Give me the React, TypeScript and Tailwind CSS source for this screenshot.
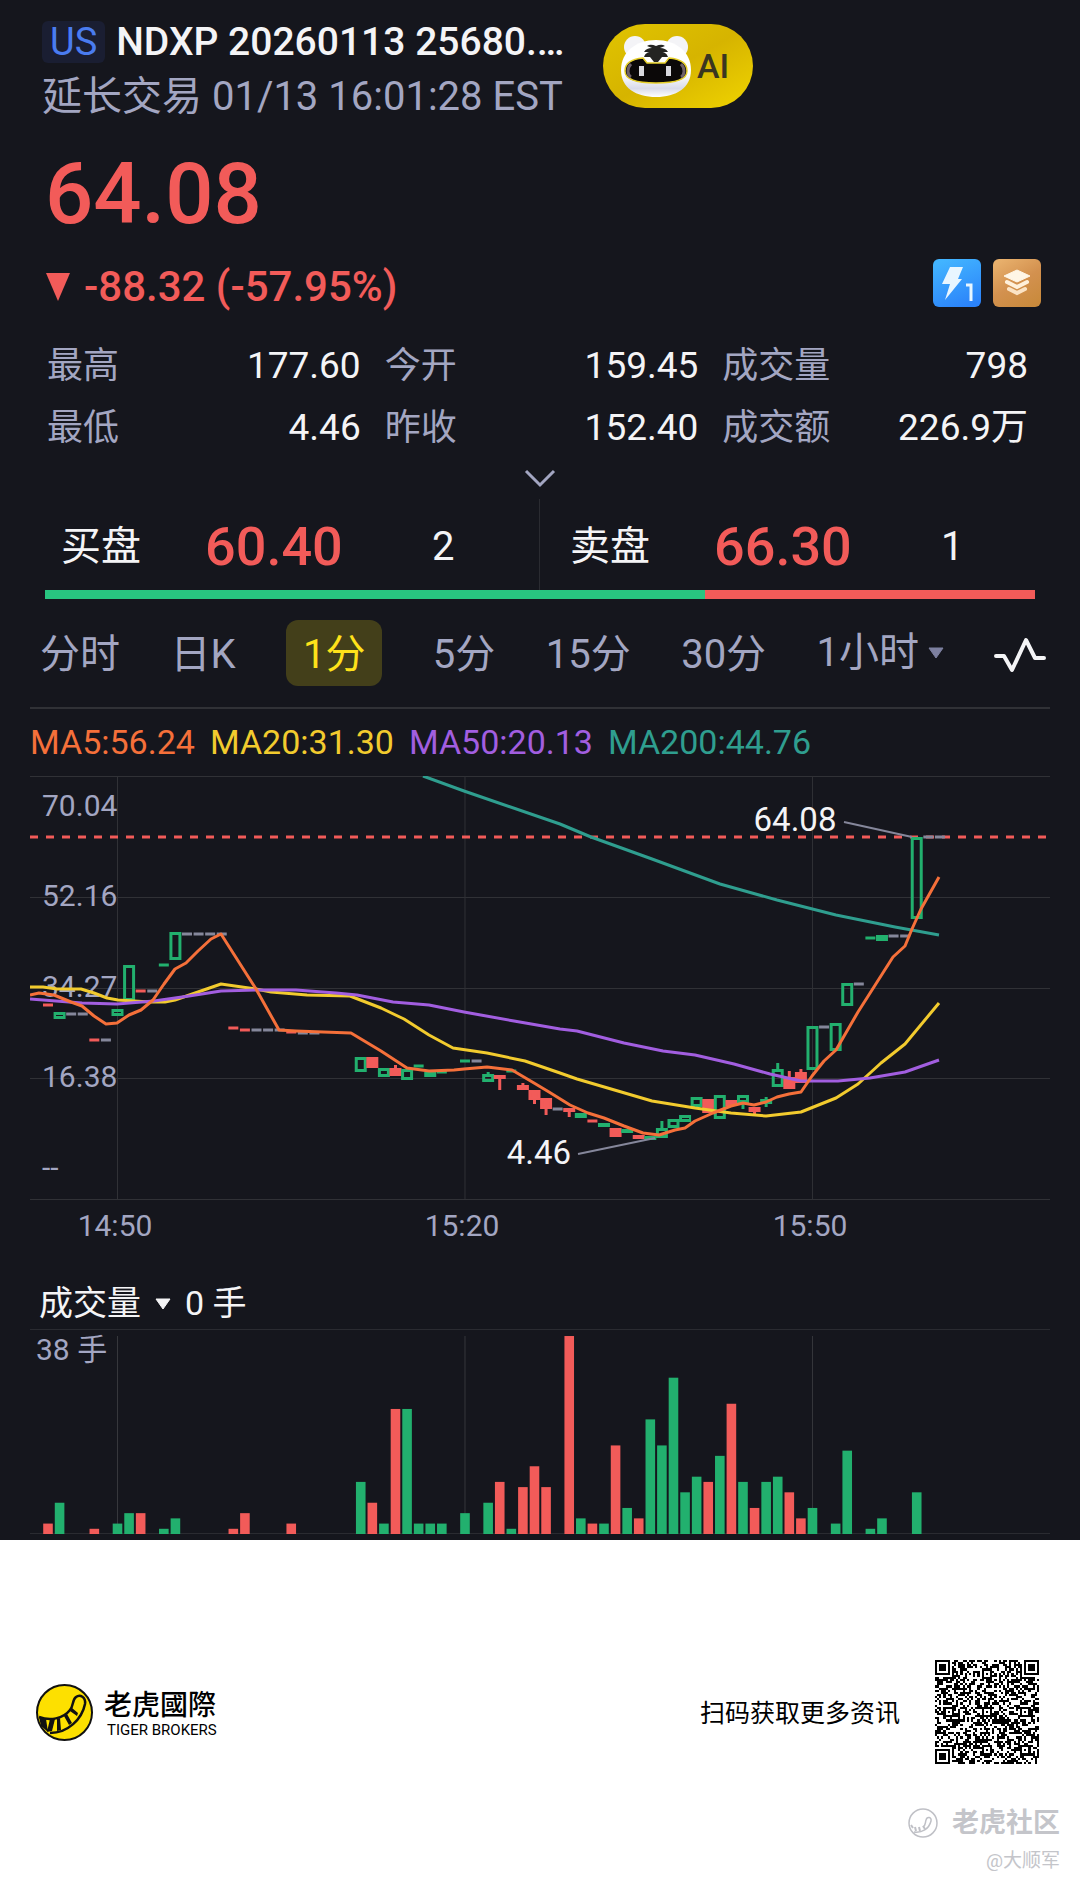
import { useState } from 'react';

const UP = '#22b06e';
const DOWN = '#f25b59';
const FLAT = '#85879b';

interface Candle {
  i: number;
  top: number;
  bottom: number;
  type: 'up' | 'down';
  high?: number;
  low?: number;
}

interface Dash {
  i: number;
  y: number;
  color: string;
}

// minutes are counted from 14:50
const toX = (i: number) => 87.5 + i * 11.583;

const candles: Candle[] = [
  { i: -5, top: 236, bottom: 243, type: 'up' },
  { i: 0, top: 233, bottom: 240, type: 'up' },
  { i: 1, top: 189, bottom: 225, type: 'up' },
  { i: 5, top: 156, bottom: 184, type: 'up' },
  { i: 21, top: 281, bottom: 296, type: 'up' },
  { i: 22, top: 281, bottom: 292, type: 'down' },
  { i: 23, top: 292, bottom: 301, type: 'up' },
  { i: 24, top: 292, bottom: 300, type: 'down', high: 289 },
  { i: 25, top: 293, bottom: 304, type: 'up' },
  { i: 27, top: 296, bottom: 301, type: 'up' },
  { i: 32, top: 298, bottom: 306, type: 'up', high: 296 },
  { i: 33, top: 299, bottom: 302, type: 'down', low: 314 },
  { i: 35, top: 309, bottom: 314, type: 'down', high: 307 },
  { i: 36, top: 314, bottom: 324, type: 'down', low: 328 },
  { i: 37, top: 322, bottom: 333, type: 'down', low: 339 },
  { i: 39, top: 332, bottom: 336, type: 'down', low: 341 },
  { i: 40, top: 337, bottom: 342, type: 'up' },
  { i: 42, top: 347, bottom: 351, type: 'up' },
  { i: 43, top: 352, bottom: 361, type: 'down' },
  { i: 44, top: 353, bottom: 357, type: 'up' },
  { i: 45, top: 359, bottom: 363, type: 'down' },
  { i: 46, top: 360, bottom: 363, type: 'up' },
  { i: 47, top: 352, bottom: 362, type: 'up', high: 345 },
  { i: 48, top: 343, bottom: 352, type: 'up' },
  { i: 49, top: 339, bottom: 346, type: 'up' },
  { i: 50, top: 321, bottom: 331, type: 'up' },
  { i: 51, top: 323, bottom: 337, type: 'down' },
  { i: 52, top: 319, bottom: 343, type: 'up' },
  { i: 53, top: 324, bottom: 330, type: 'down' },
  { i: 54, top: 319, bottom: 327, type: 'up', low: 333 },
  { i: 55, top: 331, bottom: 336, type: 'down', low: 339 },
  { i: 56, top: 323, bottom: 328, type: 'up', high: 321, low: 331 },
  { i: 57, top: 293, bottom: 311, type: 'up', high: 287 },
  { i: 58, top: 301, bottom: 313, type: 'down', high: 295 },
  { i: 59, top: 296, bottom: 307, type: 'down', high: 293 },
  { i: 60, top: 250, bottom: 294, type: 'up' },
  { i: 62, top: 247, bottom: 275, type: 'up' },
  { i: 63, top: 207, bottom: 230, type: 'up' },
  { i: 66, top: 159, bottom: 165, type: 'up' },
  { i: 69, top: 61, bottom: 143, type: 'up' },
];

const dashes: Dash[] = [
  { i: -6, y: 229, color: DOWN },
  { i: -4, y: 238, color: FLAT },
  { i: -3, y: 238, color: FLAT },
  { i: -2, y: 264, color: DOWN },
  { i: -1, y: 264, color: FLAT },
  { i: 2, y: 215, color: DOWN },
  { i: 3, y: 215, color: FLAT },
  { i: 4, y: 189, color: UP },
  { i: 6, y: 158, color: FLAT },
  { i: 7, y: 158, color: FLAT },
  { i: 8, y: 158, color: FLAT },
  { i: 9, y: 158, color: FLAT },
  { i: 10, y: 252, color: DOWN },
  { i: 11, y: 254, color: DOWN },
  { i: 12, y: 254, color: FLAT },
  { i: 13, y: 254, color: FLAT },
  { i: 14, y: 254, color: FLAT },
  { i: 15, y: 256, color: DOWN },
  { i: 16, y: 257, color: FLAT },
  { i: 17, y: 257, color: FLAT },
  { i: 26, y: 290, color: UP },
  { i: 28, y: 296, color: UP },
  { i: 30, y: 285, color: UP },
  { i: 31, y: 285, color: FLAT },
  { i: 34, y: 295, color: UP },
  { i: 38, y: 333, color: FLAT },
  { i: 41, y: 345, color: DOWN },
  { i: 61, y: 251, color: FLAT },
  { i: 64, y: 208, color: FLAT },
  { i: 65, y: 162, color: UP },
  { i: 67, y: 160, color: FLAT },
  { i: 68, y: 160, color: FLAT },
  { i: 70, y: 61, color: FLAT },
  { i: 71, y: 61, color: FLAT },
];

const lines = [
  {
    color: '#2f9e8f',
    points: '393,0 434,15 530,48 561,61 622,83 690,108 747,124 806,139 865,151 909,159',
  },
  {
    color: '#f2cb2e',
    points:
      '0,211 13,211 27,213 51,213 64,217 77,222 88,224 120,226 135,226 145,224 168,216 191,208 226,213 241,216 277,219 320,220 351,232 374,243 399,259 423,272 457,277 495,285 530,297 547,303 622,325 665,332 701,337 736,340 771,336 806,322 828,308 851,287 875,268 909,227',
  },
  {
    color: '#a25ee0',
    points:
      '0,223 13,224 52,227 87,228 124,225 159,220 191,215 227,214 266,214 306,217 327,219 363,226 399,229 434,236 484,245 530,253 547,255 594,267 633,275 665,279 704,288 740,298 771,305 808,305 840,302 875,296 909,284',
  },
  {
    color: '#f5703a',
    points:
      '0,219 9,217 24,219 41,226 52,230 64,240 76,248 87,247 99,239 111,234 123,224 134,208 145,193 156,187 168,175 181,163 191,158 226,213 249,254 266,255 293,256 321,257 331,263 351,275 377,292 399,295 424,294 434,293 457,291 482,294 504,307 519,316 540,329 558,337 574,342 594,350 613,357 629,359 645,354 655,352 665,345 683,337 701,330 713,327 724,329 736,326 747,321 759,318 771,316 782,300 794,285 806,274 828,236 863,181 875,170 882,153 891,133 909,101',
  },
];

// [minute, lots, direction]
const volumes: [number, number, 'up' | 'down'][] = [
  [-6, 2, 'down'], [-5, 6, 'up'], [-2, 1, 'down'], [0, 2, 'up'], [1, 4, 'up'], [2, 4, 'down'],
  [4, 1, 'up'], [5, 3, 'up'], [10, 1, 'down'], [11, 4, 'down'], [15, 2, 'down'], [21, 10, 'up'],
  [22, 6, 'down'], [23, 2, 'up'], [24, 24, 'down'], [25, 24, 'up'], [26, 2, 'up'], [27, 2, 'up'],
  [28, 2, 'up'], [30, 4, 'up'], [32, 6, 'up'], [33, 10, 'down'], [34, 1, 'up'], [35, 9, 'down'],
  [36, 13, 'down'], [37, 9, 'down'], [39, 38, 'down'], [40, 3, 'up'], [41, 2, 'down'], [42, 2, 'up'],
  [43, 17, 'down'], [44, 5, 'up'], [45, 3, 'down'], [46, 22, 'up'], [47, 17, 'up'], [48, 30, 'up'],
  [49, 8, 'up'], [50, 11, 'up'], [51, 10, 'down'], [52, 15, 'up'], [53, 25, 'down'], [54, 10, 'up'],
  [55, 5, 'down'], [56, 10, 'up'], [57, 11, 'up'], [58, 8, 'down'], [59, 3, 'down'], [60, 5, 'up'],
  [62, 2, 'up'], [63, 16, 'up'], [65, 1, 'up'], [66, 3, 'up'], [69, 8, 'up'],
];

const stats = [
  { label: '最高', value: '177.60' },
  { label: '今开', value: '159.45' },
  { label: '成交量', value: '798' },
  { label: '最低', value: '4.46' },
  { label: '昨收', value: '152.40' },
  { label: '成交额', value: '226.9万' },
];

const tabs = ['分时', '日K', '1分', '5分', '15分', '30分'];

const MascotIcon = () => (
  <svg viewBox="0 0 74 62" className="h-[62px] w-[74px]" aria-hidden="true">
    <defs>
      <linearGradient id="head" x1="0" y1="0" x2="0" y2="1">
        <stop offset="0.6" stopColor="#ffffff" />
        <stop offset="0.85" stopColor="#d9dbea" />
        <stop offset="1" stopColor="#ffffff" />
      </linearGradient>
    </defs>
    <circle cx="16" cy="12" r="11" fill="#f4f4f7" />
    <circle cx="58" cy="12" r="11" fill="#f4f4f7" />
    <path d="M37 5C57 5 72 17 72 35c0 18-15 27-35 27S2 53 2 35C2 17 17 5 37 5Z" fill="url(#head)" />
    <path
      d="M24 23l4 5h18l4-5c12 1 18 6 18 13 0 8-9 12-31 12S6 44 6 36c0-7 6-12 18-13Z"
      fill="#0b0808"
      stroke="#e6cf2a"
      strokeWidth="1.5"
    />
    <path d="M12 29c-4 4-4 11 0 13M62 29c4 4 4 11 0 13" stroke="#6e6068" strokeWidth="3" fill="none" />
    <path
      d="M28 11c3-2 6-1 9 0 3-1 6-2 9 0l-5 2c4 0 6 1 8 4l-7 0c4 0 6 2 7 5l-6 0-4 5h-4l-4-5-6 0c1-3 3-5 7-5l-7 0c2-3 4-4 8-4Z"
      fill="#242422"
    />
    <rect x="20" y="31" width="5" height="10" fill="#d9d9de" />
    <rect x="47" y="31" width="5" height="10" fill="#d9d9de" />
  </svg>
);

const LevelOneIcon = () => (
  <svg viewBox="0 0 48 48" className="size-12" aria-hidden="true">
    <defs>
      <linearGradient id="level" x1="0.3" y1="0" x2="0.7" y2="1">
        <stop offset="0" stopColor="#42b4ff" />
        <stop offset="1" stopColor="#2b83fa" />
      </linearGradient>
    </defs>
    <rect width="48" height="48" rx="6" fill="url(#level)" />
    <path d="M17 8h13l-5 12h4L12 41l5-16H9Z" fill="#e8f6ff" />
    <path d="M33 26h5v16" fill="none" stroke="#e8f6ff" strokeWidth="3" />
  </svg>
);

const LayersIcon = () => (
  <svg viewBox="0 0 48 48" className="size-12" aria-hidden="true">
    <defs>
      <linearGradient id="layers" x1="0.2" y1="0" x2="0.8" y2="1">
        <stop offset="0" stopColor="#e8b06c" />
        <stop offset="0.5" stopColor="#d3914f" />
        <stop offset="1" stopColor="#c98a3c" />
      </linearGradient>
    </defs>
    <rect width="48" height="48" rx="6" fill="url(#layers)" />
    <path d="M24 11l13 6-13 6-13-6Z" fill="#fff6e6" stroke="#fff6e6" strokeLinejoin="round" />
    <path d="M14 23l10 5 10-5" fill="none" stroke="#fff0da" strokeWidth="4" strokeLinecap="round" />
    <path d="M16 30l8 4 8-4" fill="none" stroke="#fbe3c4" strokeWidth="4" strokeLinecap="round" />
  </svg>
);

const TailLogo = () => (
  <svg viewBox="0 0 57 57" className="size-[57px]" aria-hidden="true">
    <circle cx="28.5" cy="28.5" r="27.5" fill="#fde000" stroke="#111" strokeWidth="2" />
    <path
      d="M3 33c11 4 24 2 31-7 4-5 2-10 6-13s10 0 9 7c-3 15-17 29-35 29"
      fill="none"
      stroke="#111"
      strokeWidth="2.5"
    />
    <path d="M3 33l7 2 2 13-7-6ZM14 35h5l-3 12-5 1ZM21 35l3-1 1 12-4 1ZM28 32l3-2 5 9-3 2ZM34 27l2-3 6 5-1 3Z" fill="#111" />
  </svg>
);

const CommunityLogo = () => (
  <svg viewBox="0 0 30 30" className="size-[30px]" fill="none" stroke="#bfc0c6" aria-hidden="true">
    <circle cx="15" cy="15" r="14" strokeWidth="1.5" />
    <path d="M6 24c8 1 15-3 17-11 1-4-4-5-5-1-1 3 0 5-3 7" strokeWidth="1.5" />
    <path d="M3 17l2 3M7 19l1 4M11 19l1 4M15 18l2 3" strokeWidth="2" />
  </svg>
);

const QR_SIZE = 49;

const buildQrPath = () => {
  const marks = [6, 24, 42];
  let seed = 20260113;
  let path = '';
  for (let y = 0; y < QR_SIZE; y++) {
    for (let x = 0; x < QR_SIZE; x++) {
      seed = (seed * 1103515245 + 12345) % 2147483648;
      let dark = seed / 2147483648 < 0.5;
      if (x === 6 || y === 6) dark = (x + y) % 2 === 0;
      marks.forEach((my) =>
        marks.forEach((mx) => {
          const d = Math.max(Math.abs(x - mx), Math.abs(y - my));
          if (d <= 2) dark = d !== 1;
        })
      );
      [[3, 3], [QR_SIZE - 4, 3], [3, QR_SIZE - 4]].forEach(([fx, fy]) => {
        const d = Math.max(Math.abs(x - fx), Math.abs(y - fy));
        if (d <= 4) dark = d !== 2 && d !== 4;
      });
      if (dark) path += `M${x} ${y}h1v1h-1Z`;
    }
  }
  return path;
};

const qrPath = buildQrPath();

const PriceChart = () => (
  <svg viewBox="0 0 1020 474" className="block w-full" role="img" aria-label="1分K线">
    <g stroke="#303136" strokeWidth="1">
      {[0.5, 121.5, 212.5, 302.5, 423.5].map((y) => (
        <line key={y} x1="0" x2="1020" y1={y} y2={y} />
      ))}
      {[0, 30, 60].map((i) => (
        <line key={i} x1={toX(i)} x2={toX(i)} y1="0" y2="423" />
      ))}
    </g>
    <g fill="#a3a6c2" fontSize="30">
      <text x="12" y="40">70.04</text>
      <text x="12" y="130">52.16</text>
      <text x="12" y="221">34.27</text>
      <text x="12" y="311">16.38</text>
      <text x="12" y="402">--</text>
      <g textAnchor="middle">
        <text x="85" y="460">14:50</text>
        <text x="432" y="460">15:20</text>
        <text x="780" y="460">15:50</text>
      </g>
    </g>
    <line x1="0" x2="1016" y1="61" y2="61" stroke={DOWN} strokeWidth="3" strokeDasharray="8 8" />
    {dashes.map((d) => (
      <rect key={d.i} x={toX(d.i) - 5} y={d.y - 1.5} width="10" height="3" fill={d.color} />
    ))}
    {candles.map((c) => {
      const x = toX(c.i);
      const color = c.type === 'up' ? UP : DOWN;
      return (
        <g key={c.i} stroke={color} strokeWidth="3">
          {c.high && <line x1={x} x2={x} y1={c.high} y2={c.top} />}
          {c.low && <line x1={x} x2={x} y1={c.bottom} y2={c.low} />}
          <rect
            x={x - 4.5}
            y={c.top + 1.5}
            width="9"
            height={Math.max(c.bottom - c.top - 3, 1)}
            fill={c.type === 'up' ? 'none' : color}
          />
        </g>
      );
    })}
    {lines.map((l) => (
      <polyline key={l.color} points={l.points} fill="none" stroke={l.color} strokeWidth="3" strokeLinejoin="round" />
    ))}
    <g stroke="#85879b" strokeWidth="2">
      <line x1="814" y1="46" x2="882" y2="61" />
      <line x1="548" y1="378" x2="625" y2="362" />
    </g>
    <g fill="#f4f4f6" fontSize="33" textAnchor="middle">
      <text x="765" y="55">64.08</text>
      <text x="509" y="388">4.46</text>
    </g>
  </svg>
);

const VolumeChart = () => (
  <svg viewBox="0 0 1020 211" className="block w-full" role="img" aria-label="成交量">
    <g stroke="#2a2b31" strokeWidth="1">
      <line x1="0" x2="1020" y1="0.5" y2="0.5" />
      <line x1="0" x2="1020" y1="204.5" y2="204.5" />
      {[0, 30, 60].map((i) => (
        <line key={i} x1={toX(i)} x2={toX(i)} y1="7" y2="205" stroke="#36373c" />
      ))}
    </g>
    <text x="6" y="31" fill="#a3a6c2" fontSize="30">38 手</text>
    {volumes.map(([i, lots, type]) => (
      <rect
        key={i}
        x={toX(i) - 4.8}
        y={205 - lots * 5.21}
        width="9.6"
        height={lots * 5.21}
        fill={type === 'up' ? UP : DOWN}
      />
    ))}
  </svg>
);

const QuoteSide = ({ label, price, size }: { label: string; price: string; size: string }) => (
  <div className="flex items-center pt-1">
    <span className="w-36 text-[40px] leading-[48px] text-[#f4f4f6]">{label}</span>
    <span className="w-[227px] text-[54px] leading-[60px] font-medium text-[#f25b59]">{price}</span>
    <span className="text-[40px] leading-[48px] text-[#f4f4f6]">{size}</span>
  </div>
);

const App = () => {
  const [activeTab, setActiveTab] = useState('1分');

  return (
    <div className="bg-white font-[Roboto,'Noto_Sans_CJK_SC',sans-serif]">
      <main className="bg-[#15161d] pt-5">
        {/* Header */}
        <header className="flex items-start gap-9 px-[42px]">
          <div className="w-[525px]">
            <div className="flex h-11 items-center gap-[11px]">
              <span className="rounded-md bg-[#1a1e32] px-2 text-[38px] leading-[42px] text-[#4a7cf0]">US</span>
              <h1 className="truncate text-[39px] leading-[46px] font-medium text-[#f4f4f6]">NDXP 20260113 25680.…</h1>
            </div>
            <p className="mt-2 text-[40px] leading-[50px] whitespace-nowrap text-[#a3a6c2]">延长交易 01/13 16:01:28 EST</p>
          </div>
          <button
            type="button"
            className="mt-1 flex h-[84px] w-[150px] items-center rounded-full bg-linear-to-br from-[#e0c400] via-[#d6b400] to-[#f0d400] pl-4 text-[34px] font-medium text-[#3a3620]"
          >
            <MascotIcon />
            <span className="pl-1">AI</span>
          </button>
        </header>

        {/* Price */}
        <div className="mt-6 px-[45px] text-[85px] leading-[96px] font-medium text-[#f25b59]">64.08</div>
        <div className="mt-[17px] flex items-start justify-between pr-[39px] pl-[46px]">
          <div className="flex items-center gap-[14px] text-[42px] leading-[56px] font-medium text-[#f25b59]">
            <svg viewBox="0 0 24 28" className="h-7 w-6" aria-hidden="true">
              <path d="M0 0h24L12 28Z" fill={DOWN} />
            </svg>
            <span>-88.32 (-57.95%)</span>
          </div>
          <div className="flex gap-3">
            <button type="button" aria-label="Level 1">
              <LevelOneIcon />
            </button>
            <button type="button" aria-label="深度">
              <LayersIcon />
            </button>
          </div>
        </div>

        {/* Stats */}
        <dl className="mt-5 grid grid-cols-[313fr_313fr_305fr] gap-x-6 pr-[52px] pl-[47px] leading-[62px]">
          {stats.map((s) => (
            <div key={s.label} className="flex justify-between">
              <dt className="text-[36px] text-[#a3a6c2]">{s.label}</dt>
              <dd className="text-[37px] text-[#f4f4f6]">{s.value}</dd>
            </div>
          ))}
        </dl>
        <button type="button" aria-label="展开" className="flex h-10 w-full items-center justify-center">
          <svg viewBox="0 0 32 20" className="h-5 w-8" fill="none" stroke="#a3a6c2" strokeWidth="3" aria-hidden="true">
            <path d="M2 2l14 14L30 2" />
          </svg>
        </button>

        {/* Bid / ask */}
        <section className="px-[45px]">
          <div className="grid h-[91px] grid-cols-2">
            <div className="grid border-r border-[#2a2b31] pl-4">
              <QuoteSide label="买盘" price="60.40" size="2" />
            </div>
            <div className="grid pl-[30px]">
              <QuoteSide label="卖盘" price="66.30" size="1" />
            </div>
          </div>
          <div className="flex h-[9px] bg-[#f25b59]">
            <div className="w-2/3 bg-[#28c580]" />
          </div>
        </section>

        {/* Period tabs */}
        <nav className="mx-[30px] mt-[21px] flex h-[89px] items-start justify-between border-b-2 border-[#303136] pr-1 pl-[10px] text-[40px] leading-[70px] text-[#a3a6c2]">
          {tabs.map((tab) => (
            <button
              key={tab}
              type="button"
              onClick={() => setActiveTab(tab)}
              className={tab === activeTab ? 'h-[66px] rounded-xl bg-[#433f1a] px-[17px] text-[#ffe21a]' : 'h-[66px]'}
            >
              {tab}
            </button>
          ))}
          <div className="flex h-[66px] items-center gap-2">
            <select aria-label="更多周期" className="appearance-none bg-transparent">
              <option>1小时</option>
              <option>2小时</option>
              <option>4小时</option>
            </select>
            <svg viewBox="0 0 16 12" className="h-3 w-4" aria-hidden="true">
              <path d="M1 1h14L8 11Z" fill="#7d80a0" stroke="#7d80a0" strokeLinejoin="round" />
            </svg>
          </div>
          <button type="button" aria-label="指标" className="flex h-[70px] items-center">
            <svg viewBox="0 0 52 36" className="h-9 w-[52px]" fill="none" stroke="#f4f4f6" strokeWidth="4" strokeLinejoin="round" strokeLinecap="round" aria-hidden="true">
              <path d="M2 19h8l8 14L32 3l9 18h9" />
            </svg>
          </button>
        </nav>

        {/* Price chart */}
        <section className="px-[30px]">
          <div className="flex gap-[15px] text-[34px] leading-[67px] whitespace-nowrap">
            <span className="text-[#f5703a]">MA5:56.24</span>
            <span className="text-[#f2cb2e]">MA20:31.30</span>
            <span className="text-[#a25ee0]">MA50:20.13</span>
            <span className="text-[#2f9e8f]">MA200:44.76</span>
          </div>
          <PriceChart />
        </section>

        {/* Volume */}
        <section className="px-[30px] pt-7">
          <div className="flex items-center pl-[9px] text-[34px] leading-[51px] text-[#f4f4f6]">
            <select aria-label="副图指标" className="appearance-none bg-transparent">
              <option>成交量</option>
              <option>成交额</option>
            </select>
            <svg viewBox="0 0 16 12" className="mx-[14px] h-3 w-4" aria-hidden="true">
              <path d="M1 1h14L8 11Z" fill="#f4f4f6" stroke="#f4f4f6" strokeLinejoin="round" />
            </svg>
            <span>0 手</span>
          </div>
          <VolumeChart />
        </section>
      </main>

      {/* Share footer */}
      <footer className="pt-[120px] pb-3">
        <div className="flex items-center justify-between pr-[41px] pl-9">
          <div className="flex items-center gap-[11px]">
            <TailLogo />
            <div className="pt-1 text-black">
              <div className="text-[28px] leading-8 font-medium">老虎國際</div>
              <div className="pl-[3px] text-[15px] leading-4">TIGER BROKERS</div>
            </div>
          </div>
          <div className="flex items-center gap-[35px]">
            <span className="pt-1 text-[25px] text-black">扫码获取更多资讯</span>
            <svg viewBox="0 0 49 49" className="size-[104px]" shapeRendering="crispEdges" role="img" aria-label="二维码">
              <path d={qrPath} fill="#000" />
            </svg>
          </div>
        </div>
        <div className="mt-[41px] flex flex-col items-end pr-5 text-[#c4c5ca]">
          <div className="flex items-center gap-[14px]">
            <CommunityLogo />
            <span className="text-[27px] leading-9 font-bold">老虎社区</span>
          </div>
          <span className="mt-1 text-[19px] leading-8">@大顺军</span>
        </div>
      </footer>
    </div>
  );
};

export default App;
